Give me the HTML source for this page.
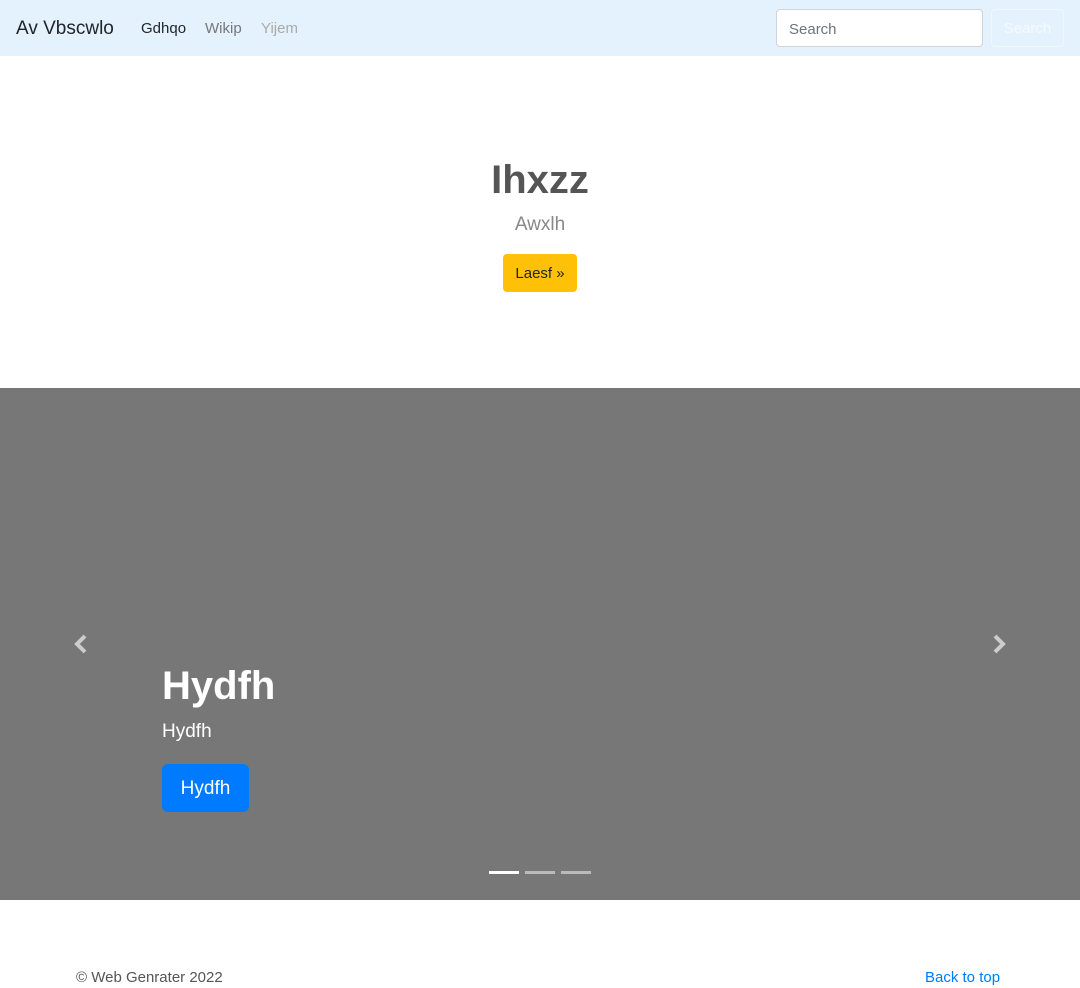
<!DOCTYPE html>
<html><head><meta charset="utf-8"><style>
*{box-sizing:border-box;margin:0;padding:0}
body{width:1080px;height:988px;overflow:hidden;font-family:"Liberation Sans",sans-serif;background:#fff;color:#212529;position:relative}
.nav{height:56px;background:#e3f2fd;position:relative}
.brand{position:absolute;left:16px;top:18px;font-size:19px;color:#212529}
.l{position:absolute;top:20px;font-size:15px}
.inp{position:absolute;left:776px;top:9px;width:207px;height:38px;border:1px solid #ced4da;border-radius:4px;background:#fff;font-size:15px;color:#6c757d;padding:11px 12px 0}
.btn2{position:absolute;left:991px;top:9px;width:73px;height:38px;border:1px solid #f0f8fe;border-radius:4px;color:#f4f9fe;font-size:15px;text-align:center;line-height:38px}
h1{position:absolute;top:158px;width:100%;text-align:center;font-size:40px;font-weight:bold;color:#555}
.sub{position:absolute;top:214px;width:100%;text-align:center;font-size:19px;color:#888}
.yb{position:absolute;left:503px;top:254px;width:74px;height:38px;background:#ffc107;border-radius:4px;font-size:15px;text-align:center;line-height:40px;color:#212529}
.car{position:absolute;top:388px;left:0;width:1080px;height:512px;background:#777}
.arr{position:absolute}
.ch{position:absolute;left:162px;top:276px;color:#fff;font-size:40px;font-weight:bold}
.cs{position:absolute;left:162px;top:333px;color:#fff;font-size:19px}
.bb{position:absolute;left:162px;top:376px;width:87px;height:48px;background:#007bff;border-radius:6px;color:#fff;font-size:19px;text-align:center;line-height:50px}
.ind{position:absolute;top:483px;width:30px;height:3px;background:#fff;opacity:.5}
.ft{position:absolute;top:969px;font-size:15px}
</style></head><body>
<div class="nav">
<div class="brand">Av Vbscwlo</div>
<div class="l" style="left:141px;color:#212529">Gdhqo</div>
<div class="l" style="left:205px;color:#777">Wikip</div>
<div class="l" style="left:261px;color:#aaa">Yijem</div>
<div class="inp">Search</div>
<div class="btn2">Search</div>
</div>
<h1>Ihxzz</h1>
<div class="sub">Awxlh</div>
<div class="yb">Laesf »</div>
<div class="car">
<svg class="arr" style="left:72px;top:246px" width="18" height="20" viewBox="0 0 18 20"><path d="M13 2L5 10l8 8" stroke="#ccc" stroke-width="4" fill="none"/></svg>
<svg class="arr" style="left:990px;top:246px" width="18" height="20" viewBox="0 0 18 20"><path d="M5 2l8 8-8 8" stroke="#ccc" stroke-width="4" fill="none"/></svg>
<div class="ch">Hydfh</div>
<div class="cs">Hydfh</div>
<div class="bb">Hydfh</div>
<div class="ind" style="left:489px;opacity:1"></div>
<div class="ind" style="left:525px"></div>
<div class="ind" style="left:561px"></div>
</div>
<div class="ft" style="left:76px;color:#555">© Web Genrater 2022</div>
<div class="ft" style="left:925px;color:#007bff">Back to top</div>
</body></html>
